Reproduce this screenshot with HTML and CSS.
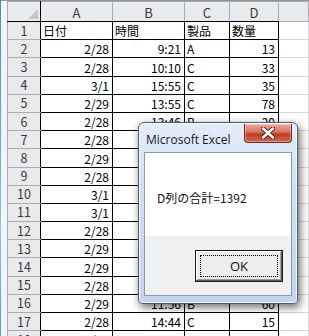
FILE: index.html
```html
<!DOCTYPE html>
<html lang="ja">
    <head>
        <meta charset="UTF-8" />
        <meta name="viewport" content="width=device-width, initial-scale=1.0" />
        <title>Book1 - Excel</title>
        <link rel="stylesheet" href="styles.css">
    </head>
    <body>
        <div class="window">
            <div class="edge"></div>
            <div class="main">
                <div class="topbar"></div>
                <div class="sheet">
                    <div class="gutter"></div>
                    <table class="grid">
                        <colgroup>
                            <col class="c-rh" />
                            <col class="c-a" />
                            <col class="c-b" />
                            <col class="c-c" />
                            <col class="c-d" />
                            <col class="c-e" />
                        </colgroup>
                        <tr class="heads">
                            <th class="corner"><div class="corner-box"><span class="tri"></span></div></th>
                            <th>A</th>
                            <th>B</th>
                            <th>C</th>
                            <th>D</th>
                            <th class="e"></th>
                        </tr>
                        <tr><th>1</th><td>日付</td><td>時間</td><td>製品</td><td>数量</td><td class="e"></td></tr>
                        <tr><th>2</th><td class="num">2/28</td><td class="num">9:21</td><td>A</td><td class="num">13</td><td class="e"></td></tr>
                        <tr><th>3</th><td class="num">2/28</td><td class="num">10:10</td><td>C</td><td class="num">33</td><td class="e"></td></tr>
                        <tr><th>4</th><td class="num">3/1</td><td class="num">15:55</td><td>C</td><td class="num">35</td><td class="e"></td></tr>
                        <tr><th>5</th><td class="num">2/29</td><td class="num">13:55</td><td>C</td><td class="num">78</td><td class="e"></td></tr>
                        <tr><th>6</th><td class="num">2/28</td><td class="num">13:46</td><td>B</td><td class="num">20</td><td class="e"></td></tr>
                        <tr><th>7</th><td class="num">2/28</td><td class="num">9:48</td><td>A</td><td class="num">52</td><td class="e"></td></tr>
                        <tr><th>8</th><td class="num">2/29</td><td class="num">16:20</td><td>B</td><td class="num">41</td><td class="e"></td></tr>
                        <tr><th>9</th><td class="num">2/28</td><td class="num">11:05</td><td>C</td><td class="num">27</td><td class="e"></td></tr>
                        <tr><th>10</th><td class="num">3/1</td><td class="num">14:12</td><td>A</td><td class="num">64</td><td class="e"></td></tr>
                        <tr><th>11</th><td class="num">3/1</td><td class="num">10:37</td><td>B</td><td class="num">18</td><td class="e"></td></tr>
                        <tr><th>12</th><td class="num">2/28</td><td class="num">15:03</td><td>C</td><td class="num">90</td><td class="e"></td></tr>
                        <tr><th>13</th><td class="num">2/29</td><td class="num">12:29</td><td>A</td><td class="num">46</td><td class="e"></td></tr>
                        <tr><th>14</th><td class="num">2/29</td><td class="num">9:57</td><td>B</td><td class="num">73</td><td class="e"></td></tr>
                        <tr><th>15</th><td class="num">2/28</td><td class="num">16:41</td><td>C</td><td class="num">55</td><td class="e"></td></tr>
                        <tr><th>16</th><td class="num">2/29</td><td class="num">11:56</td><td>B</td><td class="num">60</td><td class="e"></td></tr>
                        <tr><th>17</th><td class="num">2/28</td><td class="num">14:44</td><td>C</td><td class="num">15</td><td class="e"></td></tr>
                        <tr><th>18</th><td class="num">2/28</td><td class="num">13:44</td><td>A</td><td class="num">35</td><td class="e"></td></tr>
                    </table>
                </div>
            </div>

            <div class="msgbox">
                <div class="titlebar">
                    <span class="title">Microsoft Excel</span>
                    <button type="button" class="close">
                        <svg width="14" height="12" viewBox="0 0 14 12">
                            <path d="M2 1.5 L12 10.5 M12 1.5 L2 10.5" stroke="#4a2a24" stroke-width="4.4" stroke-linecap="round" />
                            <path d="M2 1.5 L12 10.5 M12 1.5 L2 10.5" stroke="#fff" stroke-width="2.4" stroke-linecap="round" />
                        </svg>
                    </button>
                </div>
                <div class="client">
                    <div class="message">D列の合計=1392</div>
                    <div class="buttons">
                        <button type="button" class="ok"><span class="focus">OK</span></button>
                    </div>
                </div>
            </div>
        </div>
    </body>
</html>
```

FILE: styles.css
```css
* {
    margin: 0;
    padding: 0;
    box-sizing: border-box;
}
body {
    width: 309px;
    height: 336px;
    overflow: hidden;
    background-color: #fff;
    font-family: "Noto Sans CJK JP", "Liberation Sans", sans-serif;
    color: #000;
}
.window {
    position: relative;
    display: flex;
    height: 336px;
}
.edge {
    width: 2px;
    background: linear-gradient(#4f86c0, #6fa9cf 40%, #8fc4c9 70%, #5f97c4);
}
.main {
    flex: 1;
    display: flex;
    flex-direction: column;
}
.topbar {
    height: 3px;
    background-color: #eef0f3;
    border-bottom: 1px solid #8e949b;
}
.sheet {
    display: flex;
    flex: 1;
}
.gutter {
    width: 6px;
    background-color: #f2f5f8;
}

/* grid */
.grid {
    border-collapse: collapse;
    table-layout: fixed;
    width: 301px;
    font-size: 12px;
}
.c-rh { width: 33px; }
.c-a { width: 72px; }
.c-b { width: 72px; }
.c-c { width: 45px; }
.c-d { width: 49px; }
.c-e { width: 30px; }
.grid tr {
    height: 18.2px;
}
.grid tr.heads {
    height: 19px;
}
.grid th {
    background-color: #e9eaec;
    border: 1px solid #a9adb2;
    font-weight: normal;
    font-size: 12.5px;
    color: #3a3a3a;
    line-height: 14px;
    text-align: center;
    vertical-align: middle;
}
.grid tr th:first-child {
    border-right-color: #000;
}
.grid .heads th {
    border-bottom-color: #000;
    padding-top: 2px;
    font-size: 13px;
}
.grid .heads th.e {
    border-bottom-color: #a9adb2;
}
.grid .corner {
    padding: 0;
    vertical-align: bottom;
}
.corner-box {
    display: flex;
    justify-content: flex-end;
    align-items: flex-end;
    height: 17px;
    padding: 0 2px 2px 0;
}
.tri {
    width: 0;
    height: 0;
    border-left: 10px solid transparent;
    border-bottom: 10px solid #c4c6c9;
}
.grid td {
    border: 1px solid #000;
    padding: 0 2px 1px 2px;
    line-height: 14px;
    vertical-align: bottom;
    white-space: nowrap;
    overflow: hidden;
}
.grid td.num {
    text-align: right;
    padding-right: 3px;
}
.grid td.e {
    border-color: #d4d6d9;
    border-left-color: #000;
}

/* message box */
.msgbox {
    position: absolute;
    left: 138px;
    top: 122px;
    width: 160px;
    height: 182px;
    display: flex;
    flex-direction: column;
    border: 1px solid #4d5f76;
    border-radius: 6px 6px 4px 4px;
    background: linear-gradient(#e3edf8, #d3e2f2 30%, #c2d6ec);
    box-shadow: inset 0 0 0 1px rgba(255, 255, 255, 0.75), 2px 3px 9px rgba(0, 0, 0, 0.6);
}
.titlebar {
    height: 29px;
    display: flex;
    align-items: flex-start;
    justify-content: space-between;
}
.title {
    font-family: "Open Sans", "Noto Sans", sans-serif;
    font-size: 12px;
    color: #1a1a1a;
    padding: 9px 0 0 7px;
    line-height: 16px;
}
.close {
    width: 48px;
    height: 19px;
    margin: 1px 5px 0 0;
    border: 1px solid #6d2a20;
    border-top: none;
    border-radius: 0 0 4px 4px;
    background: linear-gradient(#eda899, #d8735c 45%, #c23a22 55%, #d4654c);
    box-shadow: inset 0 0 0 1px rgba(255, 255, 255, 0.35);
    display: flex;
    align-items: center;
    justify-content: center;
    cursor: pointer;
}
.client {
    flex: 1;
    margin: 0 5px 7px 5px;
    border: 1px solid #8699b0;
    display: flex;
    flex-direction: column;
    background-color: #fff;
}
.message {
    height: 83px;
    display: flex;
    align-items: center;
    padding: 6px 0 0 12px;
    font-size: 12px;
    color: #111;
}
.buttons {
    flex: 1;
    background-color: #f0f0f0;
    display: flex;
    justify-content: flex-end;
    align-items: flex-start;
    padding: 14px 8px 0 0;
}
.ok {
    width: 88px;
    height: 32px;
    background-color: #ececec;
    border: 1px solid #1c1c1c;
    box-shadow: inset -1px -1px 0 #5e5e5e, inset 1px 1px 0 #fff, inset -2px -2px 0 #9c9c9c;
    padding: 4px;
    font-family: "Open Sans", "Noto Sans", sans-serif;
    font-size: 13px;
    color: #111;
    cursor: pointer;
}
.ok .focus {
    display: flex;
    align-items: center;
    justify-content: center;
    height: 100%;
    border: 1px dotted #000;
}
```
